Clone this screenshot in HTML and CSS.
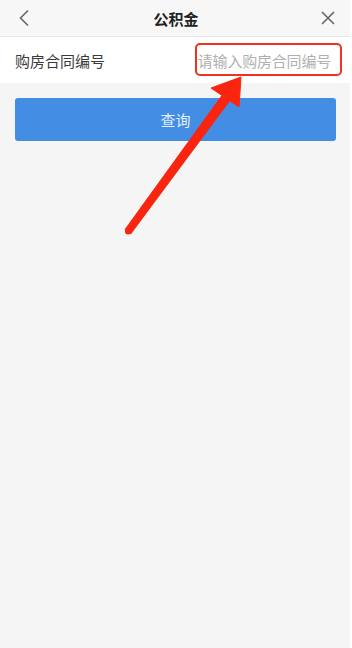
FILE: index.html
```html
<!DOCTYPE html>
<html lang="zh-CN">

<head>
    <meta charset="UTF-8">
    <meta name="viewport" content="width=device-width, initial-scale=1.0">
    <title>公积金</title>
    <link rel="stylesheet" href="styles.css">
</head>

<body>
    <div class="page">
        <div class="nav-bar">
            <button class="nav-btn back">
                <svg width="12" height="18" viewBox="0 0 12 18">
                    <path d="M10 1.5 L2.5 9 L10 16.5" fill="none" stroke="#666" stroke-width="1.6" />
                </svg>
            </button>
            <div class="nav-title">公积金</div>
            <button class="nav-btn close">
                <svg width="16" height="16" viewBox="0 0 16 16">
                    <path d="M2 2 L14 14 M14 2 L2 14" fill="none" stroke="#666" stroke-width="1.6" />
                </svg>
            </button>
        </div>

        <div class="form-row">
            <label class="form-label" for="contract">购房合同编号</label>
            <input class="form-input" id="contract" type="text" placeholder="请输入购房合同编号">
        </div>

        <button class="query-btn">查询</button>

        <!-- annotation drawn over the screenshot -->
        <div class="mark-box"></div>
        <svg class="mark-arrow" width="352" height="260" viewBox="0 0 352 260">
            <path d="M125.5 229.5 L222 96 L229 101 L130.5 233.5 Z" fill="#f9250f" stroke="#f9250f" stroke-width="1.5" stroke-linejoin="round" />
            <circle cx="128" cy="231.5" r="3" fill="#f9250f" />
            <path d="M211 88 L241 77 L239 107 Z" fill="#f9250f" stroke="#f9250f" stroke-width="1" stroke-linejoin="round" />
        </svg>
    </div>
</body>

</html>
```

FILE: styles.css
```css
*,
*::before,
*::after {
    box-sizing: border-box;
    font-family: "Noto Sans CJK SC", "Noto Sans", sans-serif;
}

body {
    margin: 0;
    padding: 0;
    background: #f5f5f5;
}

.page {
    position: relative;
    min-height: 648px;
    background: #f5f5f5;
    border-right: 2px solid #fff;
}

.nav-bar {
    display: flex;
    align-items: center;
    justify-content: space-between;
    height: 37px;
    padding: 0 10px 0 12px;
    background: #f7f7f7;
    border-bottom: 1px solid #e6e6e6;
}

.nav-btn {
    display: flex;
    align-items: center;
    justify-content: center;
    width: 24px;
    height: 30px;
    padding: 0;
    border: none;
    background: none;
}

.nav-title {
    font-size: 15px;
    font-weight: bold;
    color: #222;
}

.form-row {
    display: flex;
    align-items: center;
    height: 46px;
    padding: 0 15px 0 15px;
    background: #fff;
}

.form-label {
    font-size: 15px;
    color: #3a3a3a;
    white-space: nowrap;
}

.form-input {
    flex: 1;
    min-width: 0;
    border: none;
    outline: none;
    padding: 0;
    margin-right: 4px;
    font-size: 15px;
    letter-spacing: -0.2px;
    text-align: right;
    color: #333;
    background: transparent;
}

.form-input::placeholder {
    color: #b0b0b0;
}

.query-btn {
    display: block;
    width: 321px;
    height: 43px;
    margin: 15px 0 0 15px;
    border: none;
    border-radius: 3px;
    background: #438de4;
    color: #e6eef9;
    font-size: 15px;
}

.mark-box {
    position: absolute;
    left: 195px;
    top: 43px;
    width: 147px;
    height: 33px;
    border: 2px solid #f0321e;
    border-radius: 5px;
}

.mark-arrow {
    position: absolute;
    left: 0;
    top: 0;
}
```
